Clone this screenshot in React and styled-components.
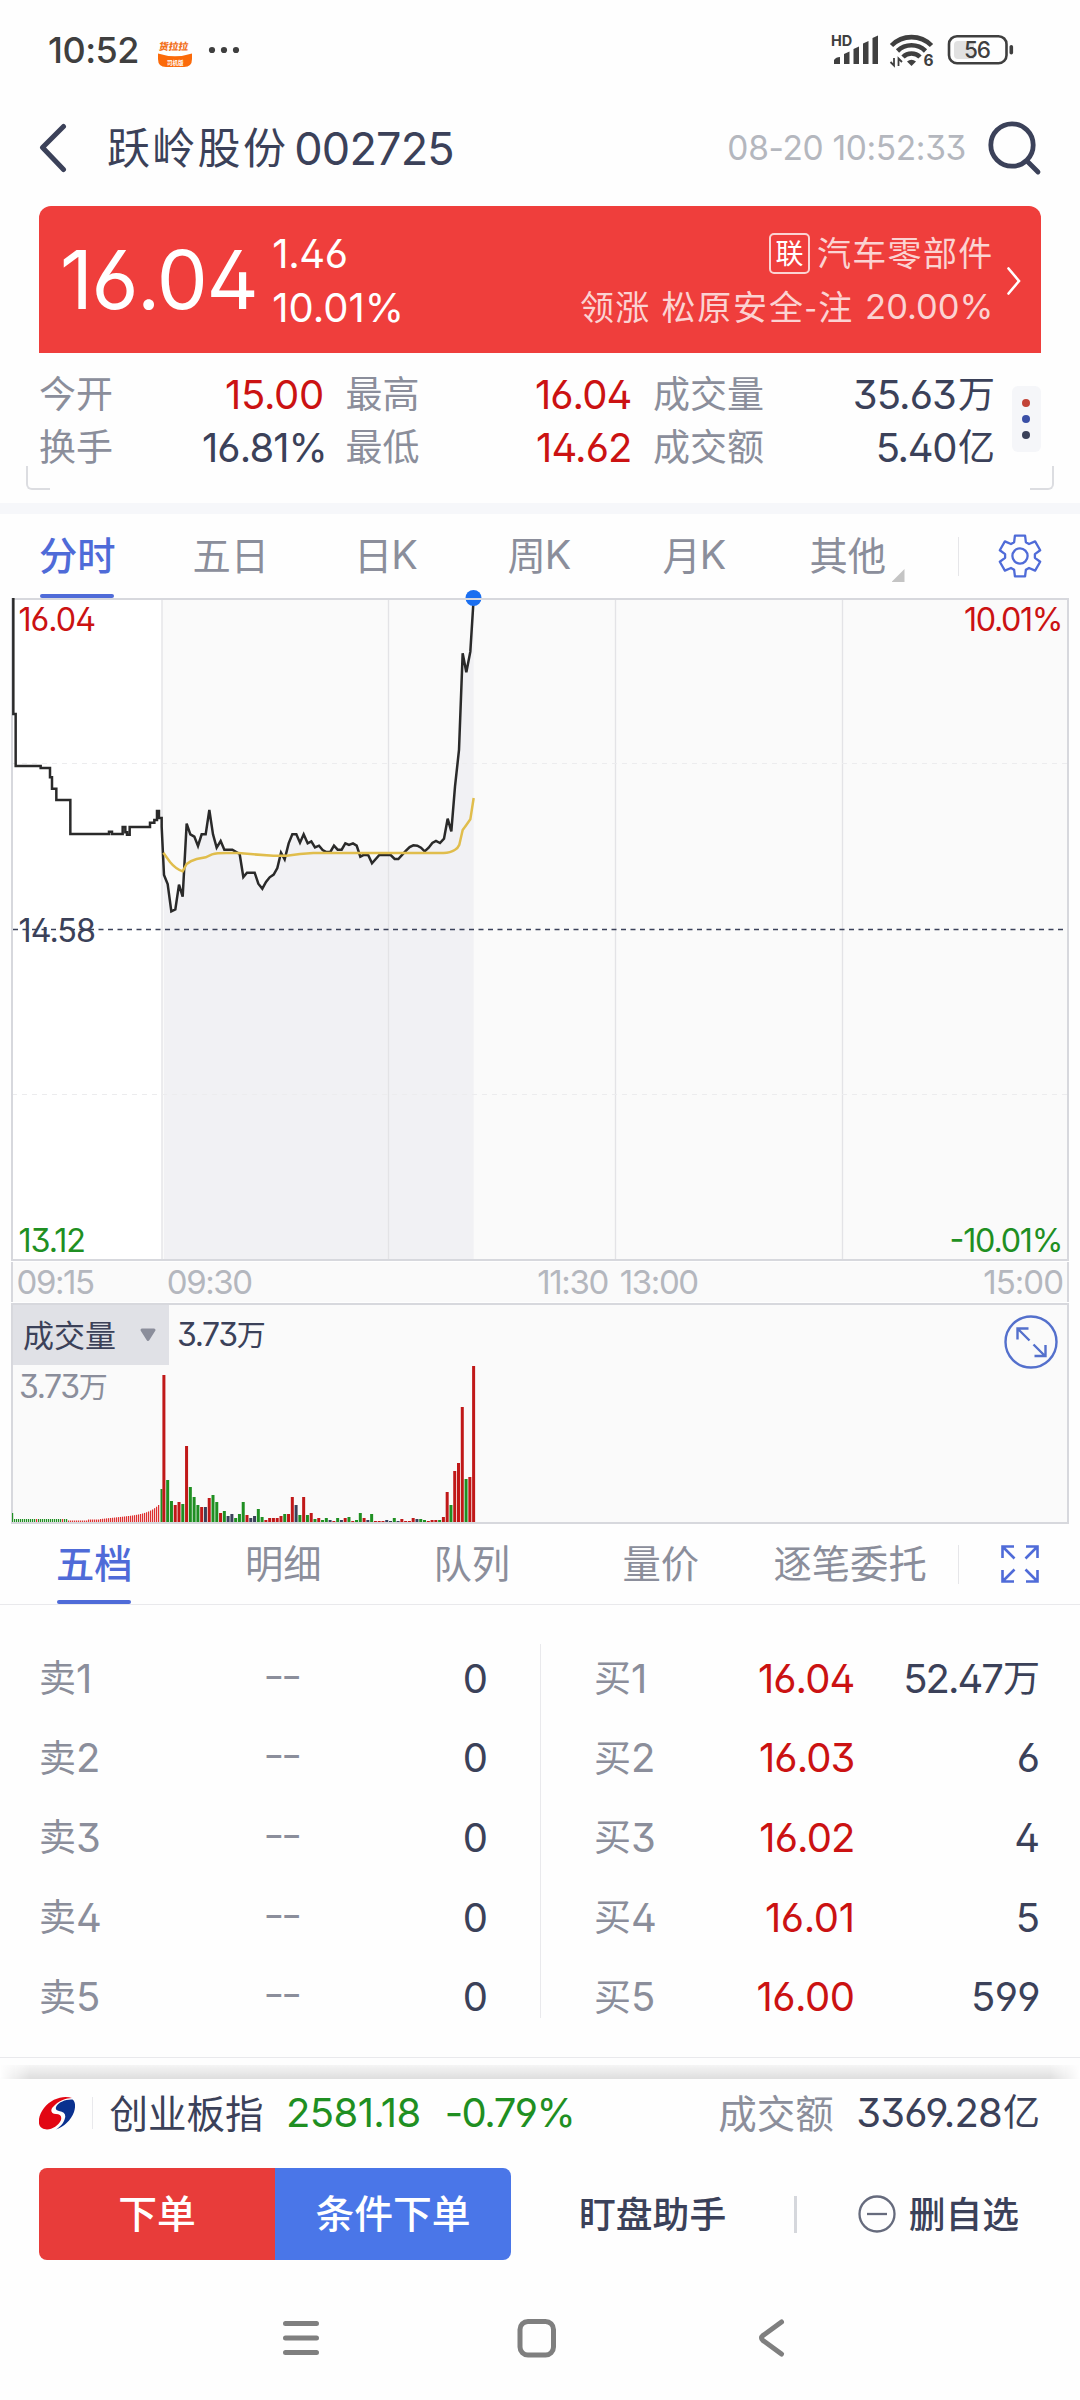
//Modules
import React from "react"
//Styles
import styled, { createGlobalStyle } from "styled-components"

const ink = "#3b4159"
const gray = "#8b8e9b"
const pale = "#b4b7be"
const red = "#cb1212"
const green = "#1f8f22"
const blue = "#4f6bd8"
const line = "#e9e9ec"
const frame = "#d7d8dd"

const tones = { ink, gray, pale, red, green, blue }

const GlobalStyle = createGlobalStyle`
  * {
    box-sizing: border-box;
  }

  body {
    margin: 0;
    background: #fefefe;
  }
`

/* ---------- Data ---------- */

const stats = [
  { label: "今开", value: "15.00", tone: "red", gap: -0.3 },
  { label: "最高", value: "16.04", tone: "red" },
  { label: "成交量", value: "35.63", unit: "万" },
  { label: "换手", value: "16.81%", percent: true },
  { label: "最低", value: "14.62", tone: "red" },
  { label: "成交额", value: "5.40", unit: "亿", gap: -1.4 },
]

const periods = [
  { han: "分时", width: 76, active: true },
  { han: "五日", width: 76 },
  { han: "日", latin: "K", width: 62 },
  { han: "周", latin: "K", width: 64 },
  { han: "月", latin: "K", width: 64 },
  { han: "其他", width: 76, more: true },
]

const panels = [
  { han: "五档", width: 76, active: true },
  { han: "明细", width: 76 },
  { han: "队列", width: 76 },
  { han: "量价", width: 76 },
  { han: "逐笔委托", width: 155 },
]

const asks = [1, 2, 3, 4, 5]

const bids = [
  { price: "16.04", count: "52.47", unit: "万", gap: -2 },
  { price: "16.03", count: "6" },
  { price: "16.02", count: "4" },
  { price: "16.01", count: "5", priceGap: -0.4 },
  { price: "16.00", count: "599", gap: -0.6, priceGap: -0.5 },
]

//One entry a minute from 09:30: colour letter and height
const volume =
  "r147 g42 g21 r17 r20 g18 r76 g35 g25 g17 r15 d15 r24 g27 g20 r9 g11 d6 d8 g4 g8 g20 r7 d4 d6 g13 g5 r2 r4 r4 r4 r6 g8 r8 r25 d17 g7 r25 g7 r9 g3 r4 g2 g4 d2 r1 g4 d2 r4 g5 r1 g2 g9 r4 d2 g8 r1 r1 r1 d2 d1 g4 d1 r3 r1 r1 r4 d3 g3 g2 r1 r2 r2 g2 r5 r30 g17 r51 r59 r115 g43 r45 r156"
    .split(" ")
    .map((bar) => ({ tone: bar[0], height: Number(bar.slice(1)) }))

const barColors = { r: "#c01818", g: "#1f8f22", d: ink }

//Call auction ticks before the open
const auction = Array.from({ length: 74 }, (_, i) => {
  if (i === 0) return { tone: "g", height: 9 }
  if (i < 28) return { tone: i % 13 === 12 ? "r" : "g", height: 3 }
  if (i < 44) return { tone: "r", height: i < 38 ? 1.5 : 2.5 }
  const t = (i - 44) / 29
  return { tone: "r", height: 3 + t * 6 + t ** 6 * 8 }
})

const pricePath =
  "M40 54V402H47V558H122V564H150V592H156V626H169V660H211V762H327V755H336V762H368V741H376V757H381V764H389V741H450V728H463V720H471V693H477V714H485V740L492 885L503 912L514 994L526 988L537 914L548 950L560 731L571 763L583 770L594 798L605 763H617L628 690L639 763L650 803L662 783L673 809H697L719 822L730 891L741 878H764L775 911L787 926L798 906L809 892L821 884L832 864L843 818L854 838L866 790L877 763H889L900 788L911 763L923 790L934 784L945 802L957 797L968 810L979 816H991L1002 797L1013 809H1025L1036 790L1047 795L1059 790L1070 797L1081 830L1093 824L1105 826L1116 850L1138 825H1172L1184 837H1195L1207 824L1218 812L1229 801L1240 796L1252 797L1263 803L1274 814L1286 803L1297 789L1308 783L1320 789L1332 776L1343 716L1354 754L1365 620L1377 510L1388 220L1399 277L1411 215L1421 55"

const areaPath = `M492 885${pricePath.split("L492 885")[1]}V2037H492Z`

const averagePath =
  "M490 818L510 846Q526 866 548 874L560 852Q572 842 590 837L617 832L636 823Q650 819 680 819H715L760 823L820 827H860L900 822L940 819H1330Q1352 818 1364 810Q1374 804 1378 794L1388 750L1399 735L1411 718L1421 654"

const gearPath = Array.from({ length: 6 }, (_, i) => {
  const at = (r, deg) => {
    const a = ((i * 60 + deg - 90) * Math.PI) / 180
    return `${(22 + r * Math.cos(a)).toFixed(2)} ${(22 + r * Math.sin(a)).toFixed(2)}`
  }
  return `${i ? "L" : "M"}${at(15, -23)}L${at(21, -14)}L${at(21, 14)}L${at(15, 23)}`
}).join("") + "Z"

/* ---------- Sections ---------- */

const StatusBar = () => (
  <StatusRow>
    <Num $size={36} $weight={500} $gap={-0.5}>10:52</Num>
    <AppBadge viewBox="0 0 34 34">
      <path d="M0 20.5Q17 26 34 20.5V26Q34 34 26 34H8Q0 34 0 26Z" fill="#fb6a0a" />
      <text x="1" y="17.5" fontSize="9.8" fontWeight="900" fill="#f2711c" transform="skewX(-8) translate(2 0)">
        货拉拉
      </text>
      <text x="9" y="31.5" fontSize="5.5" fontWeight="700" fill="#fff">司机版</text>
    </AppBadge>
    <Dots viewBox="0 0 32 8">
      <circle cx="4" cy="4" r="3.1" />
      <circle cx="16" cy="4" r="3.1" />
      <circle cx="28" cy="4" r="3.1" />
    </Dots>
    <Signals viewBox="0 0 184 44">
      <text x="-1" y="17.5" fontSize="14.5" fontWeight="700">HD</text>
      <g transform="translate(0 4)">
        <path d="M2 32V28Q4 25 8 25V32ZM12 32V22L17.5 19.5V32ZM21.5 32V17L27 14.5V32ZM31 32V11.5L36.5 9V32ZM40.5 32V6L46 3.5V32Z" />
        <g fill="none" stroke="#3f3f3f" strokeWidth="4.6">
          <path d="M59.5 13.5A28 28 0 0 1 99.5 13.5" />
          <path d="M65.5 19A20 20 0 0 1 93.5 19" />
          <path d="M71 25A12 12 0 0 1 88 25" />
        </g>
        <path d="M75 29.5Q79.5 26 84 29.5L79.5 34Z" />
        <path d="M62 26V33.5L58.5 30M66.5 34V26.5L70 30" fill="none" stroke="#3f3f3f" strokeWidth="1.8" />
        <rect x="117" y="4.2" width="57.5" height="27" rx="8" fill="none" stroke="#3f3f3f" strokeWidth="2.6" />
        <path d="M126 9H142V27H126Q122 27 122 23V13Q122 9 126 9Z" fill="#e1e1e1" />
        <rect x="177.5" y="13" width="3.6" height="9.5" rx="1.8" />
      </g>
      <text x="91.5" y="38" fontSize="15.5" fontWeight="700">6</text>
      <text x="132" y="30" fontSize="22.5" fontWeight="500" textLength="27">56</text>
    </Signals>
  </StatusRow>
)

const Header = () => (
  <HeaderRow>
    <BackIcon viewBox="0 0 28 50">
      <path d="M24.5 3.5L3.5 24.5L24.5 46.5" />
    </BackIcon>
    <Title>
      <Han $size={43} $gap={2.3}>跃岭股份</Han>
      <Num $size={45} $gap={-0.8}>002725</Num>
    </Title>
    <Clock>
      <Num $size={33.5} $tone="pale" $gap={-0.35}>08-20 10:52:33</Num>
    </Clock>
    <SearchIcon viewBox="0 0 56 56">
      <circle cx="25" cy="25" r="21.2" />
      <path d="M40.5 41.5L51 52" />
    </SearchIcon>
  </HeaderRow>
)

const Quote = () => (
  <Banner>
    <Num $size={81} $gap={-1.5}>16.04</Num>
    <Change>
      <Num $size={40} $gap={-0.4}>1.46</Num>
      <Num $size={40}>10.01%</Num>
    </Change>
    <Sector>
      <SectorLine>
        <Tag>联</Tag>
        <Han $size={34} $gap={1.3}>汽车零部件</Han>
      </SectorLine>
      <SectorLine>
        <Han $size={34} $gap={1.3}>领涨</Han>
        <Han $size={34} $gap={1.8}>松原安全-注</Han>
        <Num $size={34.5}>20.00%</Num>
      </SectorLine>
    </Sector>
    <MoreChevron viewBox="0 0 16 28">
      <path d="M2.5 1.5L13 14L2.5 26.5" />
    </MoreChevron>
  </Banner>
)

const Stats = () => (
  <StatsBox>
    <StatsGrid>
      {stats.map((s) => (
        <Stat key={s.label}>
          <Han $size={37} $tone="gray">{s.label}</Han>
          <StatValue $percent={s.percent}>
            <Num $size={40} $tone={s.tone || "ink"} $gap={s.gap || -0.9}>{s.value}</Num>
            {s.unit && <Han $size={37} $tone="ink">{s.unit}</Han>}
          </StatValue>
        </Stat>
      ))}
    </StatsGrid>
    <MoreDots>
      <Dot $color="#c24438" />
      <Dot $color="#3a4fa6" />
      <Dot $color={ink} />
    </MoreDots>
    <Corner $side="left" />
    <Corner $side="right" />
  </StatsBox>
)

const PeriodTabs = () => (
  <TabBar>
    <TabList $start={39} $gaps="77.5px 85.5px 91.5px 91px 83px">
      {periods.map((p) => (
        <Tab key={p.han} $width={p.width} $active={p.active}>
          {p.han}
          {p.latin && <Latin>{p.latin}</Latin>}
          {p.more && <Caret />}
        </Tab>
      ))}
    </TabList>
    <Rule $height={39} />
    <ToolIcon viewBox="0 0 44 44" $size={44} $left={39} $right={38}>
      <path d={gearPath} strokeWidth="2.3" strokeLinejoin="round" />
      <circle cx="22" cy="22" r="7.6" strokeWidth="2.3" />
    </ToolIcon>
  </TabBar>
)

const PriceChart = () => (
  <ChartSvg viewBox="0 0 1080 672" height={672}>
    <rect x="12" y="10" width="1056" height="661" fill="#fff" />
    <rect x="162" y="10" width="906" height="661" fill="#fafafa" />
    <g transform="translate(0 -9) scale(0.33333)">
      <path d={areaPath} fill="#f1f1f4" />
    </g>
    <path d="M162 10V671M388.5 10V671M615.5 10V671M842.5 10V671" stroke="#e3e3e6" strokeWidth="1.3" />
    <path d="M12 174.5H1068M12 505.5H1068" stroke="#ececee" strokeDasharray="5 5" />
    <path d="M13 340.5H1068" stroke={ink} strokeWidth="1.3" strokeDasharray="5 4.5" />
    <rect x="12" y="10" width="1056" height="661" fill="none" stroke={frame} strokeWidth="2" />
    <g transform="translate(0 -9) scale(0.33333)" fill="none">
      <path d={pricePath} stroke="#2a2a2a" strokeWidth="7.5" />
      <path d={averagePath} stroke="#e0bd4c" strokeWidth="7.5" />
    </g>
    <circle cx="473.5" cy="9" r="8" fill="#1b6ff0" />
    <path d="M464 10H483" stroke={frame} strokeWidth="2" />
    <g fontSize="32.3">
      <text x="18.5" y="42" textLength="77.5" fill={red}>16.04</text>
      <text x="1063.5" y="42" textLength="99.5" textAnchor="end" fill={red}>10.01%</text>
      <text x="18.5" y="353" textLength="77.5" fill={ink}>14.58</text>
      <text x="18.5" y="662.5" textLength="67.5" fill={green}>13.12</text>
      <text x="1063.5" y="662.5" textLength="114" textAnchor="end" fill={green}>-10.01%</text>
    </g>
  </ChartSvg>
)

const TimeAxis = () => (
  <AxisRow>
    <AxisLabel $at={3.5}>09:15</AxisLabel>
    <AxisLabel $at={73}>09:30</AxisLabel>
    <AxisLabel $at={285.5}>11:30</AxisLabel>
    <AxisLabel $at={12}>13:00</AxisLabel>
    <AxisLabel $end>15:00</AxisLabel>
  </AxisRow>
)

const VolumeChart = () => (
  <VolumeBox>
    <VolumeHead>
      <VolumePicker>
        <Han $size={31} $tone="ink">成交量</Han>
        <svg width="18" height="14" viewBox="0 0 18 14">
          <path d="M3 2H15L9 11.5Z" fill={gray} stroke={gray} strokeWidth="3" strokeLinejoin="round" />
        </svg>
      </VolumePicker>
      <Num $size={32} $tone="ink" $gap={-1.4}>3.73</Num>
      <Han $size={29} $tone="ink">万</Han>
    </VolumeHead>
    <VolumeMax>
      <Num $size={32} $tone="gray" $gap={-1.4}>3.73</Num>
      <Han $size={29} $tone="gray">万</Han>
    </VolumeMax>
    <Bars viewBox="0 0 1056 158" height={158}>
      {auction.map((b, i) => (
        <rect
          key={i}
          x={1 + i * 2}
          y={158 - b.height}
          width="1.2"
          height={b.height}
          fill={b.tone === "g" ? barColors.g : "#dd2f2f"}
        />
      ))}
      <rect x="149.5" y="125" width="2" height="33" fill={barColors.g} />
      {volume.map((b, i) => (
        <rect
          key={i}
          x={151.4 + i * 3.777}
          y={158 - b.height}
          width="3"
          height={b.height}
          fill={barColors[b.tone]}
        />
      ))}
    </Bars>
    <ExpandRound viewBox="0 0 56 56">
      <circle cx="28" cy="28" r="25.5" />
      <path d="M14.5 25.5V14.5H25.5M15 15L26.5 26.5M30.5 30.5L41.5 41.5M31.5 42H42.5V31" />
    </ExpandRound>
  </VolumeBox>
)

const PanelTabs = () => (
  <TabBar $panel>
    <TabList $start={56} $gaps="113px 112.5px 113px 75px">
      {panels.map((p) => (
        <Tab key={p.han} $width={p.width} $active={p.active}>
          {p.han}
        </Tab>
      ))}
    </TabList>
    <Rule $height={39} />
    <ToolIcon viewBox="0 0 40 40" $size={40} $left={41} $right={40}>
      <path
        strokeWidth="2.6"
        d="M2.5 14V2.5H14M3 3L14.5 14.5M26 2.5H37.5V14M37 3L25.5 14.5M2.5 26V37.5H14M3 37L14.5 25.5M37.5 26V37.5H26M37 37L25.5 25.5"
      />
    </ToolIcon>
  </TabBar>
)

const OrderBook = () => (
  <Book>
    <Side $pad="0 52px 0 39px">
      {asks.map((n) => (
        <Level key={n}>
          <LevelName>
            <Han $size={37} $tone="gray">卖</Han>
            <Num $size={40} $tone="gray">{n}</Num>
          </LevelName>
          <NoPrice>--</NoPrice>
          <Num $size={40} $tone="ink">0</Num>
        </Level>
      ))}
    </Side>
    <Side $pad="0 40px 0 53px" $divided>
      {bids.map((b, i) => (
        <Level key={b.price}>
          <LevelName>
            <Han $size={37} $tone="gray">买</Han>
            <Num $size={40} $tone="gray">{i + 1}</Num>
          </LevelName>
          <BidPrice>
            <Num $size={40} $tone="red" $gap={b.priceGap || -0.9}>{b.price}</Num>
          </BidPrice>
          <Count>
            <Num $size={40} $tone="ink" $gap={b.gap}>{b.count}</Num>
            {b.unit && <Han $size={37} $tone="ink">{b.unit}</Han>}
          </Count>
        </Level>
      ))}
    </Side>
  </Book>
)

const IndexBar = () => (
  <IndexRow>
    <Logo viewBox="0 0 36 34">
      <path
        fill="#e20613"
        d="M33 2C24-1 12 3 5 12C-1 20-2 29 3 32C9 36 19 31 22 24C23 20 21 18 17 18C12 18 11 14 14 11C19 5 27 2 33 2Z"
      />
      <path
        fill="#0a318f"
        d="M33.5 3.5C27 3 20 6 17.5 10C16 13 17 14.5 20 15C25 16 27 18 26 22C25 27 21 31 17 33.5C25 31 32 24 35 16C37 10 36 5 33.5 3.5Z"
      />
    </Logo>
    <LogoRule />
    <Han $size={38.5} $tone="ink">创业板指</Han>
    <IndexValue>
      <Num $size={40} $tone="green" $gap={-0.6}>2581.18</Num>
      <Num $size={40} $tone="green" $gap={-1.5}>-0.79%</Num>
    </IndexValue>
    <Turnover>
      <Han $size={38.5} $tone="gray">成交额</Han>
      <Count>
        <Num $size={40} $tone="ink" $gap={-0.8}>3369.28</Num>
        <Han $size={37} $tone="ink">亿</Han>
      </Count>
    </Turnover>
  </IndexRow>
)

const Actions = () => (
  <ActionRow>
    <TradeGroup>
      <TradeButton $color="#e83c3a">下单</TradeButton>
      <TradeButton $color="#4a76e8">条件下单</TradeButton>
    </TradeGroup>
    <Assistant>
      <Han $size={36.8} $weight={500} $tone="ink">盯盘助手</Han>
    </Assistant>
    <ActionRule />
    <Remove>
      <svg width="38" height="38" viewBox="0 0 38 38" fill="none" stroke="#666b7d" strokeWidth="2.3">
        <circle cx="19" cy="19" r="17.5" />
        <path d="M9 19H29" />
      </svg>
      <Han $size={36.8} $weight={500} $tone="ink">删自选</Han>
    </Remove>
  </ActionRow>
)

const NavBar = () => (
  <Nav>
    <NavIcon viewBox="0 0 40 40">
      <path d="M4.5 5.5H35.5M4.5 20H35.5M4.5 34.5H35.5" />
    </NavIcon>
    <NavIcon viewBox="0 0 40 40">
      <rect x="4" y="3.5" width="33.5" height="33.5" rx="8" />
    </NavIcon>
    <NavIcon viewBox="0 0 40 40">
      <path d="M30.5 4L12 17.5Q9 20 12 22.5L30.5 36" />
    </NavIcon>
  </Nav>
)

const App = () => {
  return (
    <>
      <GlobalStyle />
      <Screen>
        <StatusBar />
        <Header />
        <Quote />
        <Stats />
        <Band />
        <PeriodTabs />
        <PriceChart />
        <TimeAxis />
        <VolumeChart />
        <PanelTabs />
        <OrderBook />
        <Shade />
        <IndexBar />
        <Actions />
        <NavBar />
      </Screen>
    </>
  )
}

/* ---------- Styles ---------- */

const Screen = styled.main`
  display: flex;
  flex-direction: column;
  width: 1080px;
  height: 2400px;
  overflow: hidden;
  background: #fefefe;
  color: ${ink};
  font-family: Inter, "Noto Sans CJK SC", sans-serif;

  svg {
    display: block;
    flex-shrink: 0;
  }
`

const Num = styled.span`
  font-family: Inter, sans-serif;
  font-feature-settings: "ss01";
  font-size: ${(p) => p.$size}px;
  font-weight: ${(p) => p.$weight || 400};
  letter-spacing: ${(p) => p.$gap || 0}px;
  line-height: 1;
  white-space: pre;
  color: ${(p) => tones[p.$tone] || "inherit"};
`

//The bottom padding lifts the glyphs to the optical centre of the line
const Han = styled.span`
  padding-bottom: 0.11em;
  font-family: "Noto Sans CJK SC", sans-serif;
  font-size: ${(p) => p.$size}px;
  font-weight: ${(p) => p.$weight || 400};
  letter-spacing: ${(p) => p.$gap || 0}px;
  line-height: 1;
  white-space: pre;
  color: ${(p) => tones[p.$tone] || "inherit"};
`

const StatusRow = styled.header`
  display: flex;
  align-items: center;
  height: 100px;
  padding-left: 48px;
  color: #3f3f3f;
`

const AppBadge = styled.svg`
  width: 34px;
  height: 34px;
  margin-left: 19px;
  font-family: "Noto Sans CJK SC", sans-serif;
`

const Dots = styled.svg`
  width: 32px;
  height: 8px;
  margin-left: 16px;
  fill: #3f3f3f;
`

const Signals = styled.svg`
  width: 184px;
  height: 44px;
  margin: 0 64px 0 auto;
  overflow: visible;
  fill: #3f3f3f;
`

const HeaderRow = styled.div`
  display: flex;
  align-items: center;
  height: 106px;
  padding: 0 37px 10px 38.5px;
`

const BackIcon = styled.svg`
  width: 28px;
  height: 50px;
  fill: none;
  stroke: ${ink};
  stroke-width: 5;
  stroke-linecap: round;
  stroke-linejoin: round;
`

const Title = styled.h1`
  display: flex;
  align-items: center;
  gap: 6px;
  margin: 0 0 0 40.5px;
  font-weight: 400;
`

const Clock = styled.div`
  display: flex;
  margin-left: auto;
  padding-top: 2px;
`

const SearchIcon = styled.svg`
  width: 56px;
  height: 56px;
  margin: 0 0 0 21px;
  fill: none;
  stroke: ${ink};
  stroke-width: 4.8;
  stroke-linecap: round;
`

const Banner = styled.section`
  display: flex;
  align-items: center;
  height: 147px;
  margin: 0 39px;
  padding: 2px 19px 0 21px;
  border-radius: 12px 12px 0 0;
  background: #ef3e3c;
  color: #fff;
`

const Change = styled.div`
  display: flex;
  flex-direction: column;
  gap: 14px;
  margin-left: 15px;
`

const Sector = styled.div`
  display: flex;
  flex-direction: column;
  gap: 6px;
  margin-left: auto;
  color: #fbd3d2;
`

const SectorLine = styled.div`
  display: flex;
  align-items: center;
  justify-content: flex-end;
  gap: 11px;
  height: 48px;
`

const Tag = styled.span`
  width: 41px;
  height: 41px;
  margin-right: -4px;
  border: 2px solid #fbd3d2;
  border-radius: 5px;
  color: #fff;
  font-family: "Noto Sans CJK SC", sans-serif;
  font-size: 28px;
  line-height: 34px;
  text-align: center;
`

const MoreChevron = styled.svg`
  width: 16px;
  height: 28px;
  margin-left: 12.5px;
  fill: none;
  stroke: #fff;
  stroke-width: 2.6;
  stroke-linecap: round;
`

const StatsBox = styled.section`
  position: relative;
  display: flex;
  height: 150px;
  padding-left: 39px;
`

const StatsGrid = styled.div`
  display: grid;
  grid-template: 53px 53px / 285px 286px 342px;
  column-gap: 21.5px;
  padding-top: 15px;
`

const Stat = styled.div`
  display: flex;
  align-items: center;
  justify-content: space-between;
`

const StatValue = styled.div`
  display: flex;
  align-items: center;
  gap: 2px;
  margin-right: ${(p) => (p.$percent ? -3 : 0)}px;
`

const MoreDots = styled.div`
  display: flex;
  flex-direction: column;
  align-items: center;
  justify-content: center;
  gap: 8px;
  width: 29px;
  height: 66px;
  margin: 33px 0 0 16.5px;
  border-radius: 6px;
  background: #f5f6f9;
`

const Dot = styled.i`
  width: 8px;
  height: 8px;
  border-radius: 50%;
  background: ${(p) => p.$color};
`

const Corner = styled.i`
  position: absolute;
  bottom: 13px;
  ${(p) => p.$side}: 26px;
  width: 24px;
  height: 24px;
  border-bottom: 2.5px solid #dcdde1;
  border-${(p) => p.$side}: 2.5px solid #dcdde1;
  border-bottom-${(p) => p.$side}-radius: 6px;
`

const Band = styled.div`
  height: 11px;
  background: #f6f7fa;
`

const TabBar = styled.nav`
  position: relative;
  display: flex;
  align-items: center;
  height: ${(p) => (p.$panel ? 81 : 84)}px;
  border-bottom: ${(p) => (p.$panel ? `1px solid ${line}` : "0")};
`

const TabList = styled.div`
  display: flex;
  align-self: stretch;
  padding-left: ${(p) => p.$start}px;

  ${(p) =>
    p.$gaps
      .split(" ")
      .map((gap, i) => `> :nth-child(${i + 2}) { margin-left: ${gap}; }`)
      .join("\n")}
`

const Tab = styled.span`
  position: relative;
  display: flex;
  align-items: center;
  width: ${(p) => p.$width}px;
  padding-bottom: 4px;
  font-family: "Noto Sans CJK SC", sans-serif;
  font-size: 38.3px;
  font-weight: ${(p) => (p.$active ? 500 : 400)};
  line-height: 1;
  white-space: nowrap;
  color: ${(p) => (p.$active ? blue : gray)};

  &::after {
    content: "";
    display: ${(p) => (p.$active ? "block" : "none")};
    position: absolute;
    left: 1px;
    bottom: 0;
    width: 74px;
    height: 4px;
    border-radius: 2px;
    background: ${blue};
  }
`

const Latin = styled.span`
  margin-left: -1px;
  padding-top: 4px;
  font-family: Inter, sans-serif;
  font-size: 39.5px;
`

const Caret = styled.i`
  position: absolute;
  right: -19px;
  bottom: 16px;
  width: 13px;
  height: 13px;
  background: #c4c4c4;
  clip-path: polygon(100% 0, 100% 100%, 0 100%);
`

const Rule = styled.i`
  width: 1px;
  height: ${(p) => p.$height}px;
  margin-left: auto;
  background: #e6e6e9;
`

const ToolIcon = styled.svg`
  width: ${(p) => p.$size}px;
  height: ${(p) => p.$size}px;
  margin: 0 ${(p) => p.$right}px 0 ${(p) => p.$left}px;
  fill: none;
  stroke: ${blue};
`

const ChartSvg = styled.svg`
  position: relative;
  width: 1080px;
  margin-top: -9px;
  font-family: Inter, sans-serif;
  font-feature-settings: "ss01";
`

const AxisRow = styled.div`
  display: flex;
  align-items: center;
  height: 40px;
  margin: 1px 11px 1px;
  border: solid ${frame};
  border-width: 0 2px;
  background: #fafafa;
`

const AxisLabel = styled.span`
  margin-left: ${(p) => (p.$end ? "auto" : `${p.$at}px`)};
  margin-right: ${(p) => (p.$end ? 4 : 0)}px;
  color: ${pale};
  font-size: 33px;
  letter-spacing: ${(p) => (p.$end ? -1 : -1.4)}px;
  line-height: 1;
`

const VolumeBox = styled.section`
  position: relative;
  height: 221px;
  margin: 0 11px;
  border: 2px solid ${frame};
  background: #fafafa;
`

const VolumeHead = styled.div`
  display: flex;
  align-items: center;
  height: 60px;
`

const VolumePicker = styled.div`
  display: flex;
  align-items: center;
  justify-content: space-between;
  width: 156px;
  height: 60px;
  margin-right: 8px;
  padding: 0 12px 0 10px;
  background: #e0e1e6;
`

const VolumeMax = styled.div`
  display: flex;
  align-items: center;
  height: 44px;
  padding-left: 6px;
`

const Bars = styled.svg`
  position: absolute;
  left: -2px;
  bottom: 0;
  width: 1056px;
`

const ExpandRound = styled.svg`
  position: absolute;
  top: 9px;
  right: 8px;
  width: 56px;
  height: 56px;
  fill: none;
  stroke: #5470cc;
  stroke-width: 2.4;
`

const Book = styled.section`
  display: flex;
  height: 453px;
  padding-top: 39px;
  border-bottom: 1px solid ${line};
`

const Side = styled.div`
  width: 540px;
  height: 374px;
  padding: ${(p) => p.$pad};
  border-left: ${(p) => (p.$divided ? `1px solid ${line}` : "0")};
`

const Level = styled.div`
  display: flex;
  align-items: center;
  height: 79.6px;

  &:first-child {
    margin-top: -5px;
  }
`

const LevelName = styled.div`
  display: flex;
  align-items: center;
  width: 90px;
`

const NoPrice = styled.span`
  flex: 1;
  padding: 0 0 8px 134px;
  color: ${gray};
  font-size: 48px;
  font-weight: 300;
  letter-spacing: -4px;
  line-height: 1;
`

const BidPrice = styled.div`
  display: flex;
  justify-content: flex-end;
  width: 170.5px;
`

const Count = styled.div`
  display: flex;
  align-items: center;
  gap: 1px;
  margin-left: auto;
`

const Shade = styled.div`
  height: 14px;
  margin-top: 7px;
  background: linear-gradient(#f5f5f5, #dedede);
  mask-image: linear-gradient(90deg, transparent, #000 30px, #000 1050px, transparent);
`

const IndexRow = styled.section`
  display: flex;
  align-items: center;
  height: 68px;
  padding: 0 40px 0 39px;
`

const Logo = styled.svg`
  width: 36px;
  height: 34px;
`

const LogoRule = styled.i`
  width: 1px;
  height: 32px;
  margin: 0 16.5px 0 17px;
  background: ${line};
`

const IndexValue = styled.div`
  display: flex;
  gap: 24px;
  margin-left: 22.5px;
`

const Turnover = styled.div`
  display: flex;
  align-items: center;
  gap: 22.5px;
  margin-left: auto;
`

const ActionRow = styled.section`
  display: flex;
  align-items: center;
  height: 92px;
  margin-top: 21px;
  padding-left: 39px;
`

const TradeGroup = styled.div`
  display: flex;
  width: 472px;
  height: 92px;
  border-radius: 8px;
  overflow: hidden;
`

const TradeButton = styled.button`
  width: 236px;
  padding: 0 0 5px;
  border: 0;
  background: ${(p) => p.$color};
  color: #fff;
  font-family: "Noto Sans CJK SC", sans-serif;
  font-size: 38.8px;
  font-weight: 500;
  line-height: 1;
`

const Assistant = styled.div`
  display: flex;
  margin-left: 68px;
`

const ActionRule = styled.i`
  width: 2.5px;
  height: 37px;
  margin-left: 68px;
  background: #d5d7dc;
`

const Remove = styled.div`
  display: flex;
  align-items: center;
  gap: 13px;
  margin-left: 61px;
`

const Nav = styled.nav`
  display: flex;
  gap: 195px;
  padding: 58px 0 0 281px;
`

const NavIcon = styled.svg`
  width: 40px;
  height: 40px;
  fill: none;
  stroke: #7f7f7f;
  stroke-width: 5;
  stroke-linecap: round;
`

export default App
